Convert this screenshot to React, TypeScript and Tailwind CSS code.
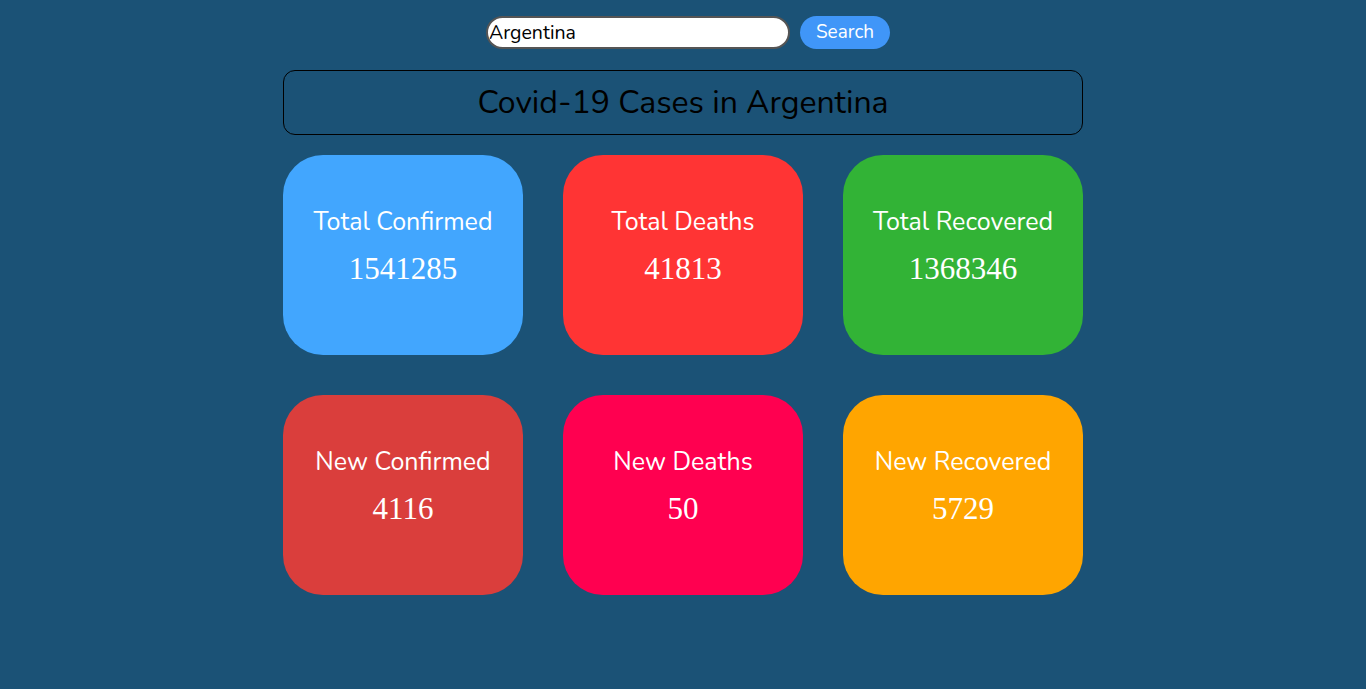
import { useState } from "react";

type Stat = { label: string; value: number; color: string };

const stats: Stat[] = [
  { label: "Total Confirmed", value: 1541285, color: "bg-[#42a6fe]" },
  { label: "Total Deaths", value: 41813, color: "bg-[#ff3434]" },
  { label: "Total Recovered", value: 1368346, color: "bg-[#32b336]" },
  { label: "New Confirmed", value: 4116, color: "bg-[#da3e3c]" },
  { label: "New Deaths", value: 50, color: "bg-[#ff0050]" },
  { label: "New Recovered", value: 5729, color: "bg-[#ffa500]" },
];

export default function App() {
  const [country, setCountry] = useState("Argentina");

  return (
    <div className="min-h-[689px] bg-[#1b5276] font-['Nunito','Lato','Open_Sans',sans-serif]">
      {/* Search */}
      <div className="flex justify-center items-center gap-[10px] pt-[16px] pl-[10px]">
        <input
          value={country}
          onChange={(e) => setCountry(e.target.value)}
          className="w-[304px] h-[33px] bg-white rounded-full border-2 border-[#555] px-[1px] text-[19.5px] text-black outline-none"
        />
        <button className="w-[90px] h-[33px] rounded-full bg-[#4096f8] text-white text-[19px]">
          Search
        </button>
      </div>

      {/* Title */}
      <div className="w-[800px] mx-auto mt-[21px] h-[65px] border border-black rounded-[12px] flex items-center justify-center">
        <h1 className="text-[32px] text-black">Covid-19 Cases in {country}</h1>
      </div>

      {/* Cards */}
      <div className="w-[800px] mx-auto mt-[20px] grid grid-cols-3 gap-[40px]">
        {stats.map((s) => (
          <div
            key={s.label}
            className={`${s.color} h-[200px] rounded-[40px] flex flex-col items-center pt-[50px] text-white`}
          >
            <div className="text-[25px] leading-[34px]">{s.label}</div>
            <div className="mt-[10px] text-[31px] leading-[40px] font-['Liberation_Serif',serif]">
              {s.value}
            </div>
          </div>
        ))}
      </div>
    </div>
  );
}
